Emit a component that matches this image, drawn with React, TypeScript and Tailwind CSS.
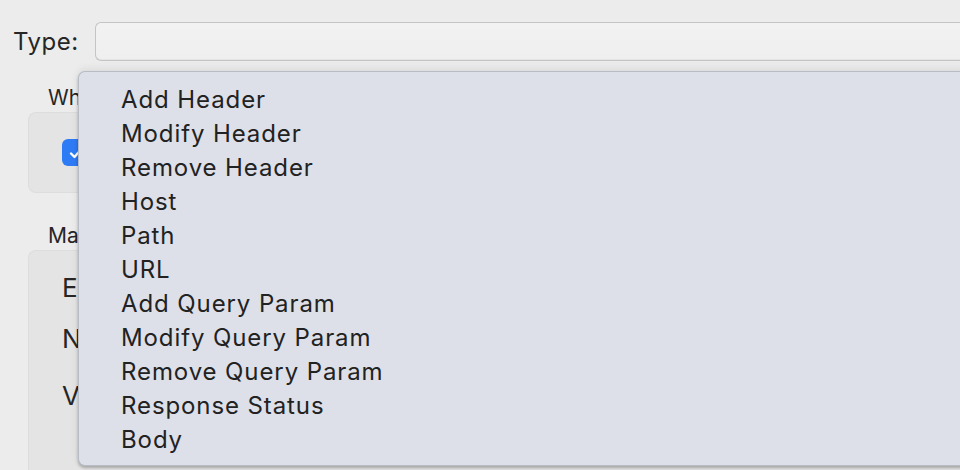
import React from "react";

const items = [
  "Add Header",
  "Modify Header",
  "Remove Header",
  "Host",
  "Path",
  "URL",
  "Add Query Param",
  "Modify Query Param",
  "Remove Query Param",
  "Response Status",
  "Body",
];

export default function App() {
  return (
    <div
      className="relative w-[960px] h-[470px] overflow-hidden bg-[#ececec] text-[#262626]"
      style={{ fontFamily: "Inter, 'Open Sans', sans-serif" }}
    >
      <div className="flex flex-col pl-[13px] pt-[22px]">
        <div className="flex items-center h-[39px]">
          <span className="text-[24px] leading-none w-[82px] tracking-[0.5px]">Type:</span>
          <div className="flex-1 h-[39px] rounded-l-[6px] border border-r-0 border-[#c4c4c4] bg-gradient-to-b from-[#f2f2f2] to-[#efefef] shadow-[inset_0_-1px_0_#e4e4e4]" />
        </div>

        <div className="pl-[35px] mt-[26px] text-[21px] leading-none">What</div>
        <div className="ml-[15px] mt-[4px] h-[81px] rounded-l-[8px] border border-r-0 border-[#dddddd] bg-[#e4e4e4] flex items-center pl-[33px]">
          <div className="w-[27px] h-[27px] rounded-[6px] bg-[#2e7bf6] flex items-center justify-center">
            <svg width="16" height="16" viewBox="0 0 16 16">
              <path d="M3 8.5 L6.5 12 L13 4.5" stroke="white" strokeWidth="2.4" fill="none" strokeLinecap="round" strokeLinejoin="round" />
            </svg>
          </div>
        </div>

        <div className="pl-[35px] mt-[32px] text-[21px] leading-none">Match</div>
        <div className="ml-[15px] mt-[4px] h-[240px] rounded-tl-[8px] border border-r-0 border-b-0 border-[#dddddd] bg-[#e4e4e4] flex flex-col pl-[33px] pt-[24px] text-[26px] leading-none">
          <span>Enabled</span>
          <span className="mt-[25px]">Name</span>
          <span className="mt-[31px]">Value</span>
        </div>
      </div>

      <div className="absolute left-[78px] top-[71px] w-[900px] h-[395px] rounded-l-[7px] border border-r-0 border-[#b8bcc4] bg-[#dde0e8] shadow-[0_-2px_8px_rgba(0,0,0,0.08),0_2px_3px_rgba(0,0,0,0.25)] pt-[11px] pl-[42px]">
        {items.map((t) => (
          <div key={t} className="h-[34px] flex items-center text-[24px] leading-none text-[#222222] tracking-[0.9px]">
            {t}
          </div>
        ))}
      </div>
    </div>
  );
}
